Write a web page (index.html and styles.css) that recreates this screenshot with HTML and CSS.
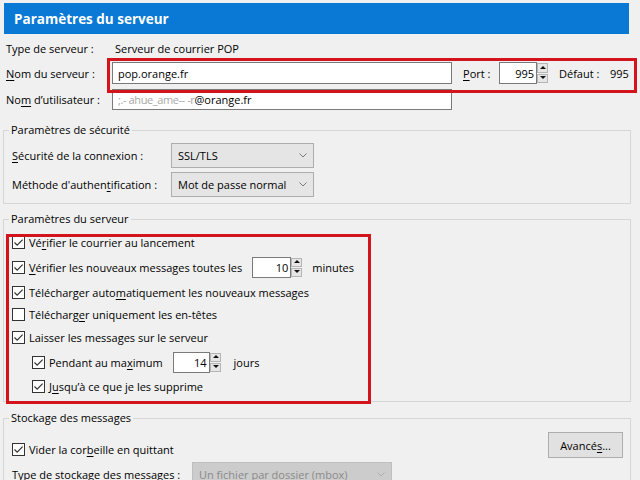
FILE: index.html
```html
<!DOCTYPE html>
<html lang="fr">
<head>
<meta charset="utf-8">
<title>Paramètres du serveur</title>
<link rel="stylesheet" href="styles.css">
</head>
<body>
<div class="dlg">
  <div class="hdr">Paramètres du serveur</div>

  <div class="srv">
    <div class="row r1">
      <span class="lbl">Type de serveur :</span>
      <span class="val">Serveur de courrier POP</span>
    </div>
    <div class="row r2">
      <span class="lbl"><u>N</u>om du serveur :</span>
      <div class="inp host">pop.orange.fr</div>
      <span class="port-lbl"><u>P</u>ort :</span>
      <div class="spin port">
        <div class="num">995</div>
        <div class="arrows"><span class="up"></span><span class="dn"></span></div>
      </div>
      <span class="def">Défaut :</span>
      <span class="defv">995</span>
    </div>
    <div class="row r3">
      <span class="lbl">No<u>m</u> d’utilisateur :</span>
      <div class="inp host user"><span class="blur">;.- ahue_ame-- -r</span>@orange.fr</div>
    </div>
  </div>

  <fieldset class="grp sec">
    <legend>Paramètres de sécurité</legend>
    <div class="srow">
      <span class="slbl"><u>S</u>écurité de la connexion :</span>
      <div class="sel">SSL/TLS<svg class="chev" width="8" height="5" viewBox="0 0 8 5"><path d="M0.5 0.5 L4 4 L7.5 0.5" fill="none" stroke="#7a7a7a" stroke-width="1"/></svg></div>
    </div>
    <div class="srow">
      <span class="slbl">Méthode d'authen<u>t</u>ification :</span>
      <div class="sel">Mot de passe normal<svg class="chev" width="8" height="5" viewBox="0 0 8 5"><path d="M0.5 0.5 L4 4 L7.5 0.5" fill="none" stroke="#7a7a7a" stroke-width="1"/></svg></div>
    </div>
  </fieldset>

  <fieldset class="grp opts">
    <legend>Paramètres du serveur</legend>
    <div class="crow h22">
      <svg class="cb" width="13" height="13" viewBox="0 0 13 13"><rect x="0.5" y="0.5" width="12" height="12" fill="#fff" stroke="#333"/><path d="M2.5 6.5 L5.2 9.2 L10.6 3.6" fill="none" stroke="#333" stroke-width="1.2"/></svg>
      <span>Vé<u>r</u>ifier le courrier au lancement</span>
    </div>
    <div class="crow h28">
      <svg class="cb" width="13" height="13" viewBox="0 0 13 13"><rect x="0.5" y="0.5" width="12" height="12" fill="#fff" stroke="#333"/><path d="M2.5 6.5 L5.2 9.2 L10.6 3.6" fill="none" stroke="#333" stroke-width="1.2"/></svg>
      <span><u>V</u>érifier les nouveaux messages toutes les</span>
      <div class="spin mins">
        <div class="num">10</div>
        <div class="arrows"><span class="up"></span><span class="dn"></span></div>
      </div>
      <span class="unit">minutes</span>
    </div>
    <div class="crow h22">
      <svg class="cb" width="13" height="13" viewBox="0 0 13 13"><rect x="0.5" y="0.5" width="12" height="12" fill="#fff" stroke="#333"/><path d="M2.5 6.5 L5.2 9.2 L10.6 3.6" fill="none" stroke="#333" stroke-width="1.2"/></svg>
      <span>Télécharger auto<u>m</u>atiquement les nouveaux messages</span>
    </div>
    <div class="crow h22">
      <svg class="cb" width="13" height="13" viewBox="0 0 13 13"><rect x="0.5" y="0.5" width="12" height="12" fill="#fff" stroke="#333"/></svg>
      <span>Télécharg<u>e</u>r uniquement les en-têtes</span>
    </div>
    <div class="crow h24">
      <svg class="cb" width="13" height="13" viewBox="0 0 13 13"><rect x="0.5" y="0.5" width="12" height="12" fill="#fff" stroke="#333"/><path d="M2.5 6.5 L5.2 9.2 L10.6 3.6" fill="none" stroke="#333" stroke-width="1.2"/></svg>
      <span>Laisser les messa<u>g</u>es sur le serveur</span>
    </div>
    <div class="crow h26 ind">
      <svg class="cb" width="13" height="13" viewBox="0 0 13 13"><rect x="0.5" y="0.5" width="12" height="12" fill="#fff" stroke="#333"/><path d="M2.5 6.5 L5.2 9.2 L10.6 3.6" fill="none" stroke="#333" stroke-width="1.2"/></svg>
      <span>Pendant au ma<u>x</u>imum</span>
      <div class="spin days">
        <div class="num">14</div>
        <div class="arrows"><span class="up"></span><span class="dn"></span></div>
      </div>
      <span class="unit2">jours</span>
    </div>
    <div class="crow h22 ind">
      <svg class="cb" width="13" height="13" viewBox="0 0 13 13"><rect x="0.5" y="0.5" width="12" height="12" fill="#fff" stroke="#333"/><path d="M2.5 6.5 L5.2 9.2 L10.6 3.6" fill="none" stroke="#333" stroke-width="1.2"/></svg>
      <span>J<u>u</u>squ’à ce que je les supprime</span>
    </div>
  </fieldset>

  <fieldset class="grp store">
    <legend>Stockage des messages</legend>
    <div class="vrow">
      <div class="vcheck">
        <svg class="cb" width="13" height="13" viewBox="0 0 13 13"><rect x="0.5" y="0.5" width="12" height="12" fill="#fff" stroke="#333"/><path d="M2.5 6.5 L5.2 9.2 L10.6 3.6" fill="none" stroke="#333" stroke-width="1.2"/></svg>
        <span>Vider la cor<u>b</u>eille en quittant</span>
      </div>
      <div class="btn">Avancé<u>s</u>...</div>
    </div>
    <div class="trow">
      <span class="tlbl">Type de stockage des messages :</span>
      <div class="sel dis">Un fichier par dossier (mbox)<svg class="chev" width="8" height="5" viewBox="0 0 8 5"><path d="M0.5 0.5 L4 4 L7.5 0.5" fill="none" stroke="#b0b0b0" stroke-width="1"/></svg></div>
    </div>
  </fieldset>

  <div class="mark m1"></div>
  <div class="mark m2"></div>
</div>
</body>
</html>
```

FILE: styles.css
```css
html, body {
  margin: 0;
  padding: 0;
  background: #f0f0f0;
}
body {
  font-family: "Open Sans", "Noto Sans", "DejaVu Sans", sans-serif;
  font-size: 11px;
  color: #000;
  width: 640px;
  height: 480px;
  overflow: hidden;
}
u { text-decoration: underline; text-underline-offset: 2px; text-decoration-thickness: 1px; }

.dlg { position: relative; height: 480px; }

.hdr {
  margin: 3px 11px 0 4px;
  height: 31px;
  background: #0a78d5;
  color: #fff;
  font-weight: bold;
  font-size: 13.5px;
  display: flex;
  align-items: center;
  padding-left: 10px;
  box-sizing: border-box;
}

.srv { margin-top: 2px; }
.row {
  display: flex;
  align-items: center;
  padding-left: 6px;
}
.r1 { height: 24px; }
.r2 { height: 26px; }
.r3 { height: 26px; }
.lbl { width: 106px; flex: none; }
.val { margin-left: 3px; }

.inp {
  background: #fff;
  border: 1px solid #7a7a7a;
  box-sizing: border-box;
  height: 22px;
  display: flex;
  align-items: center;
  padding-left: 5px;
}
.host { width: 340px; }
.user { height: 21px; }
.blur { color: #a8a8a8; letter-spacing: -0.4px; margin-right: 0; }

.port-lbl { margin-left: 11px; width: 36px; }
.spin { display: flex; height: 21px; }
.port { height: 22px; }
.spin .num {
  background: #fff;
  border: 1px solid #7a7a7a;
  box-sizing: border-box;
  display: flex;
  align-items: center;
  justify-content: flex-end;
  padding-right: 2px;
}
.port .num { width: 38px; }
.mins .num { width: 39px; }
.days .num { width: 37px; }
.arrows {
  width: 11px;
  display: flex;
  flex-direction: column;
  justify-content: center;
  gap: 1px;
  padding: 1px 0;
  box-sizing: border-box;
}
.arrows span {
  flex: 1;
  background: #e6e6e6;
  border: 1px solid #b5b5b5;
  position: relative;
}
.arrows span::after {
  content: "";
  position: absolute;
  left: 2px;
  top: 50%;
  margin-top: -2px;
  border-left: 3px solid transparent;
  border-right: 3px solid transparent;
}
.arrows .up::after { border-bottom: 3px solid #111; }
.arrows .dn::after { border-top: 3px solid #111; }

.def { margin-left: 11px; width: 51px; }

.grp {
  border: 1px solid #d6d6d6;
  margin: 0 0 0 3px;
  width: 628px;
  box-sizing: border-box;
  padding: 0 0 0 8px;
}
.grp legend {
  padding: 0 2px;
  margin-left: -3px;
  line-height: 16px;
}

.sec { margin-top: 10px; padding-top: 3px; padding-bottom: 4px; }
.srow { display: flex; align-items: center; height: 29px; }
.slbl { width: 159px; flex: none; }
.sel {
  width: 143px;
  height: 25px;
  box-sizing: border-box;
  background: #e5e5e5;
  border: 1px solid #adadad;
  display: flex;
  align-items: center;
  justify-content: space-between;
  padding: 0 6px 0 6px;
}
.chev { flex: none; }

.opts { margin-top: 7px; padding-top: 4px; padding-bottom: 4px; }
.crow { display: flex; align-items: center; }
.cb { flex: none; margin-right: 4px; }
.h22 { height: 22px; }
.h24 { height: 24px; }
.h26 { height: 26px; }
.h28 { height: 28px; }
.ind { padding-left: 20px; }
.mins { margin-left: 10px; }
.unit { margin-left: 10px; }
.days { margin-left: 10px; }
.unit2 { margin-left: 13px; }

.store { margin-top: 8px; padding-top: 3px; padding-right: 7px; height: 80px; }
.vrow { display: flex; justify-content: space-between; align-items: flex-start; height: 33px; }
.vcheck { display: flex; align-items: center; margin-top: 12px; height: 16px; }
.btn {
  margin-top: 3px;
  width: 75px;
  height: 26px;
  box-sizing: border-box;
  background: #e1e1e1;
  border: 1px solid #adadad;
  display: flex;
  align-items: center;
  justify-content: center;
}
.trow { display: flex; align-items: center; height: 25px; }
.tlbl { width: 180px; flex: none; }
.sel.dis { width: 200px; background: #cccccc; border-color: #bfbfbf; color: #8a8a8a; }

.mark {
  position: absolute;
  border: 3px solid #d3141c;
  box-sizing: border-box;
}
.m1 { left: 107px; top: 55px; width: 530px; height: 35px; }
.m2 { left: 6px; top: 231px; width: 365px; height: 170px; }
```
